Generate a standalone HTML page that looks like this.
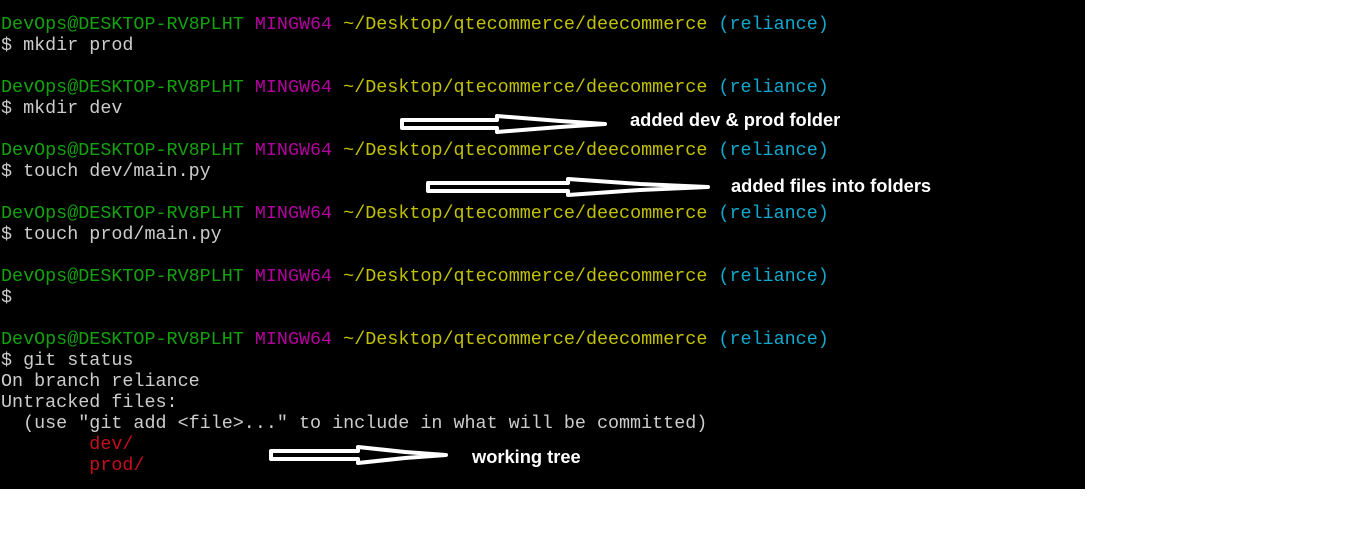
<!DOCTYPE html>
<html><head><style>
body{margin:0;width:1360px;height:555px;background:#fff;position:relative;overflow:hidden}
#t{position:absolute;left:0;top:0;width:1085px;height:489px;background:#000}
pre{position:absolute;left:1px;top:14px;margin:0;font-family:"Liberation Mono",monospace;font-size:18.4px;line-height:21px;color:#cccccc}
.g{color:#13a10e}.m{color:#b4009e}.y{color:#c1c100}.c{color:#11a8cd}.r{color:#c50f1f}
.l{position:absolute;color:#fff;font-family:"Liberation Sans",sans-serif;font-weight:bold;font-size:18.3px}
svg{position:absolute;left:0;top:0}
</style></head><body>
<div id="t"></div>
<pre><span class="g">DevOps@DESKTOP-RV8PLHT</span> <span class="m">MINGW64</span> <span class="y">~/Desktop/qtecommerce/deecommerce</span> <span class="c">(reliance)</span>
$ mkdir prod

<span class="g">DevOps@DESKTOP-RV8PLHT</span> <span class="m">MINGW64</span> <span class="y">~/Desktop/qtecommerce/deecommerce</span> <span class="c">(reliance)</span>
$ mkdir dev

<span class="g">DevOps@DESKTOP-RV8PLHT</span> <span class="m">MINGW64</span> <span class="y">~/Desktop/qtecommerce/deecommerce</span> <span class="c">(reliance)</span>
$ touch dev/main.py

<span class="g">DevOps@DESKTOP-RV8PLHT</span> <span class="m">MINGW64</span> <span class="y">~/Desktop/qtecommerce/deecommerce</span> <span class="c">(reliance)</span>
$ touch prod/main.py

<span class="g">DevOps@DESKTOP-RV8PLHT</span> <span class="m">MINGW64</span> <span class="y">~/Desktop/qtecommerce/deecommerce</span> <span class="c">(reliance)</span>
$

<span class="g">DevOps@DESKTOP-RV8PLHT</span> <span class="m">MINGW64</span> <span class="y">~/Desktop/qtecommerce/deecommerce</span> <span class="c">(reliance)</span>
$ git status
On branch reliance
Untracked files:
  (use "git add &lt;file&gt;..." to include in what will be committed)
        <span class="r">dev/</span>
        <span class="r">prod/</span>
</pre>
<svg width="1360" height="555">
<g fill="#000" stroke="#fff" stroke-width="4" stroke-linejoin="round">
<polygon points="402,120 497,120 497,116 560,121 605,124 560,127 497,132 497,128 402,128"/>
<polygon points="428,183 568,183 568,179 640,184 708,187 640,190 568,195 568,191 428,191"/>
<polygon points="271,451 358,451 358,447 405,452 446,455 405,458 358,463 358,459 271,459"/>
</g>
</svg>
<div class="l" style="left:630px;top:109px">added dev &amp; prod folder</div>
<div class="l" style="left:731px;top:175px">added files into folders</div>
<div class="l" style="left:472px;top:446px">working tree</div>
</body></html>
